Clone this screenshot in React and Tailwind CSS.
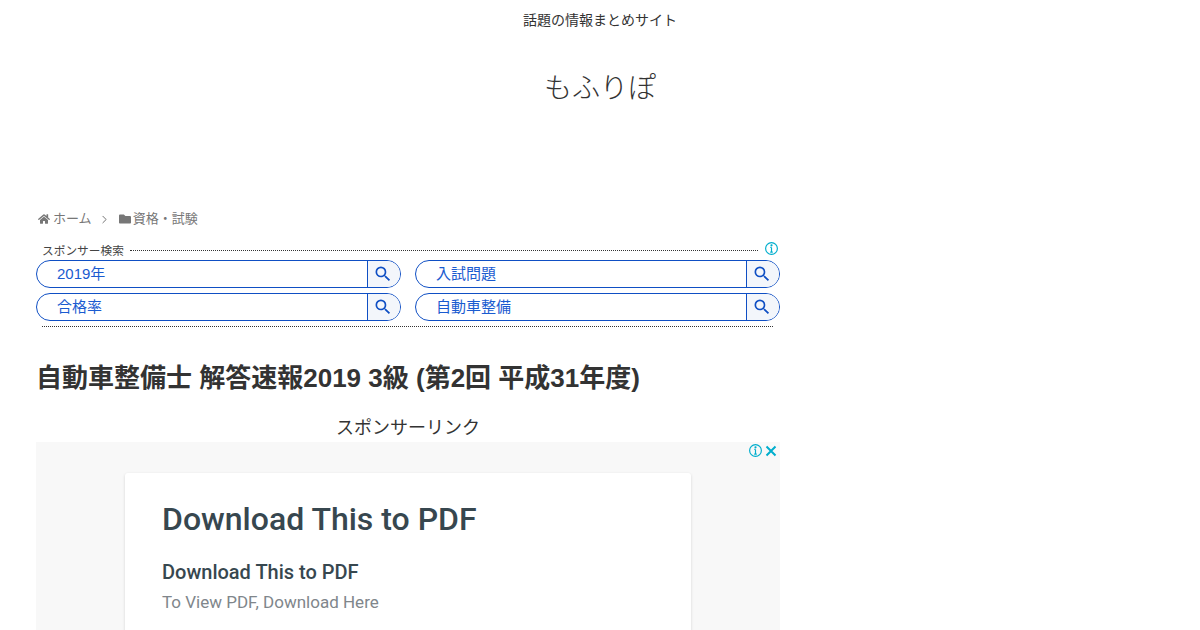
import { MdSearch } from "react-icons/md";
import { FaHome, FaFolder } from "react-icons/fa";
import { ChevronRight } from "lucide-react";

const jp = "font-['Liberation_Sans','Noto_Sans_CJK_JP',sans-serif]";

function SearchBox({ text }) {
  return (
    <div className="flex h-7 w-[365px] rounded-full border border-[#0f4fc4] overflow-hidden">
      <div className="flex-1 pl-5 text-[15px] leading-[26px] text-[#1a5bd0]">{text}</div>
      <div className="flex w-[33px] items-center justify-center border-l border-[#0f4fc4] bg-[#f3f6fb] pr-[2px]">
        <MdSearch className="text-[20px] text-[#0f4fc4]" />
      </div>
    </div>
  );
}

function InfoIcon({ className }) {
  return (
    <svg viewBox="0 0 14 14" className={className} fill="none" stroke="#00aecd" strokeWidth="1.1">
      <circle cx="7" cy="7" r="5.5" />
      <path d="M7 6v4.2M5.8 10.3h2.4M5.9 6h1.1" />
      <circle cx="7" cy="4" r="0.5" fill="#00aecd" />
    </svg>
  );
}

export default function App() {
  return (
    <div className={`h-[630px] w-[1200px] overflow-hidden bg-white text-[#333] ${jp}`}>
      {/* Header */}
      <header className="h-[199px] pt-[11px] text-center">
        <p className="text-sm leading-[18px]">話題の情報まとめサイト</p>
        <h1 className="mt-[40px] text-[28px] font-light leading-[40px]">もふりぽ</h1>
      </header>

      <main className="ml-9 w-[744px]">
        {/* Breadcrumb */}
        <div className="flex h-[40px] items-center pl-0.5 text-[13px] text-[#777]">
          <FaHome className="mr-[3px] text-[12px]" />
          <span>ホーム</span>
          <ChevronRight className="mx-[6px] size-[13px] text-[#555]" strokeWidth={1.5} />
          <FaFolder className="ml-[2px] mr-[2px] text-[12px]" />
          <span>資格・試験</span>
        </div>

        {/* Sponsored search */}
        <div className="flex h-[21px] items-center pl-1.5">
          <span className="mt-[1px] text-[11.7px] leading-[21px] text-[#444]">スポンサー検索</span>
          <div className="ml-1.5 mt-[2px] w-[628px] border-t border-dotted border-[#333]" />
          <InfoIcon className="mb-[3px] ml-[6px] size-[15px]" />
        </div>
        <div className="grid grid-cols-[365px_365px] gap-x-3.5 gap-y-[5px]">
          <SearchBox text="2019年" />
          <SearchBox text="入試問題" />
          <SearchBox text="合格率" />
          <SearchBox text="自動車整備" />
        </div>
        <div className="ml-1.5 mt-[5px] w-[731px] border-t border-dotted border-[#333]" />

        <h2 className="mt-[31px] text-[26px] font-bold leading-[40px]">自動車整備士 解答速報2019 3級 (第2回 平成31年度)</h2>

        <p className="mt-[17px] text-center text-lg leading-[26px]">スポンサーリンク</p>

        {/* Ad */}
        <div className="relative mt-[1px] h-[300px] bg-[#f8f8f8] pt-[31px]">
          <div className="absolute right-[3px] top-[1px] flex items-center gap-[2px]">
            <InfoIcon className="size-[15px]" />
            <svg viewBox="0 0 12 12" className="size-[12px]" fill="none" stroke="#00aecd" strokeWidth="2">
              <path d="M1.5 1.5l9 9M10.5 1.5l-9 9" />
            </svg>
          </div>
          <div className="mx-auto h-[260px] w-[566px] rounded-[3px] bg-white pl-[37px] pt-[22px] shadow-[0_1px_3px_rgba(0,0,0,0.15)] font-['Roboto',sans-serif]">
            <p className="text-[32px] font-medium leading-[48px] text-[#37474f]">Download This to PDF</p>
            <p className="mt-[16px] text-xl font-medium leading-[26px] text-[#37474f]">Download This to PDF</p>
            <p className="mt-[4px] text-[17px] leading-[26px] text-[#80868b]">To View PDF, Download Here</p>
          </div>
        </div>
      </main>
    </div>
  );
}
